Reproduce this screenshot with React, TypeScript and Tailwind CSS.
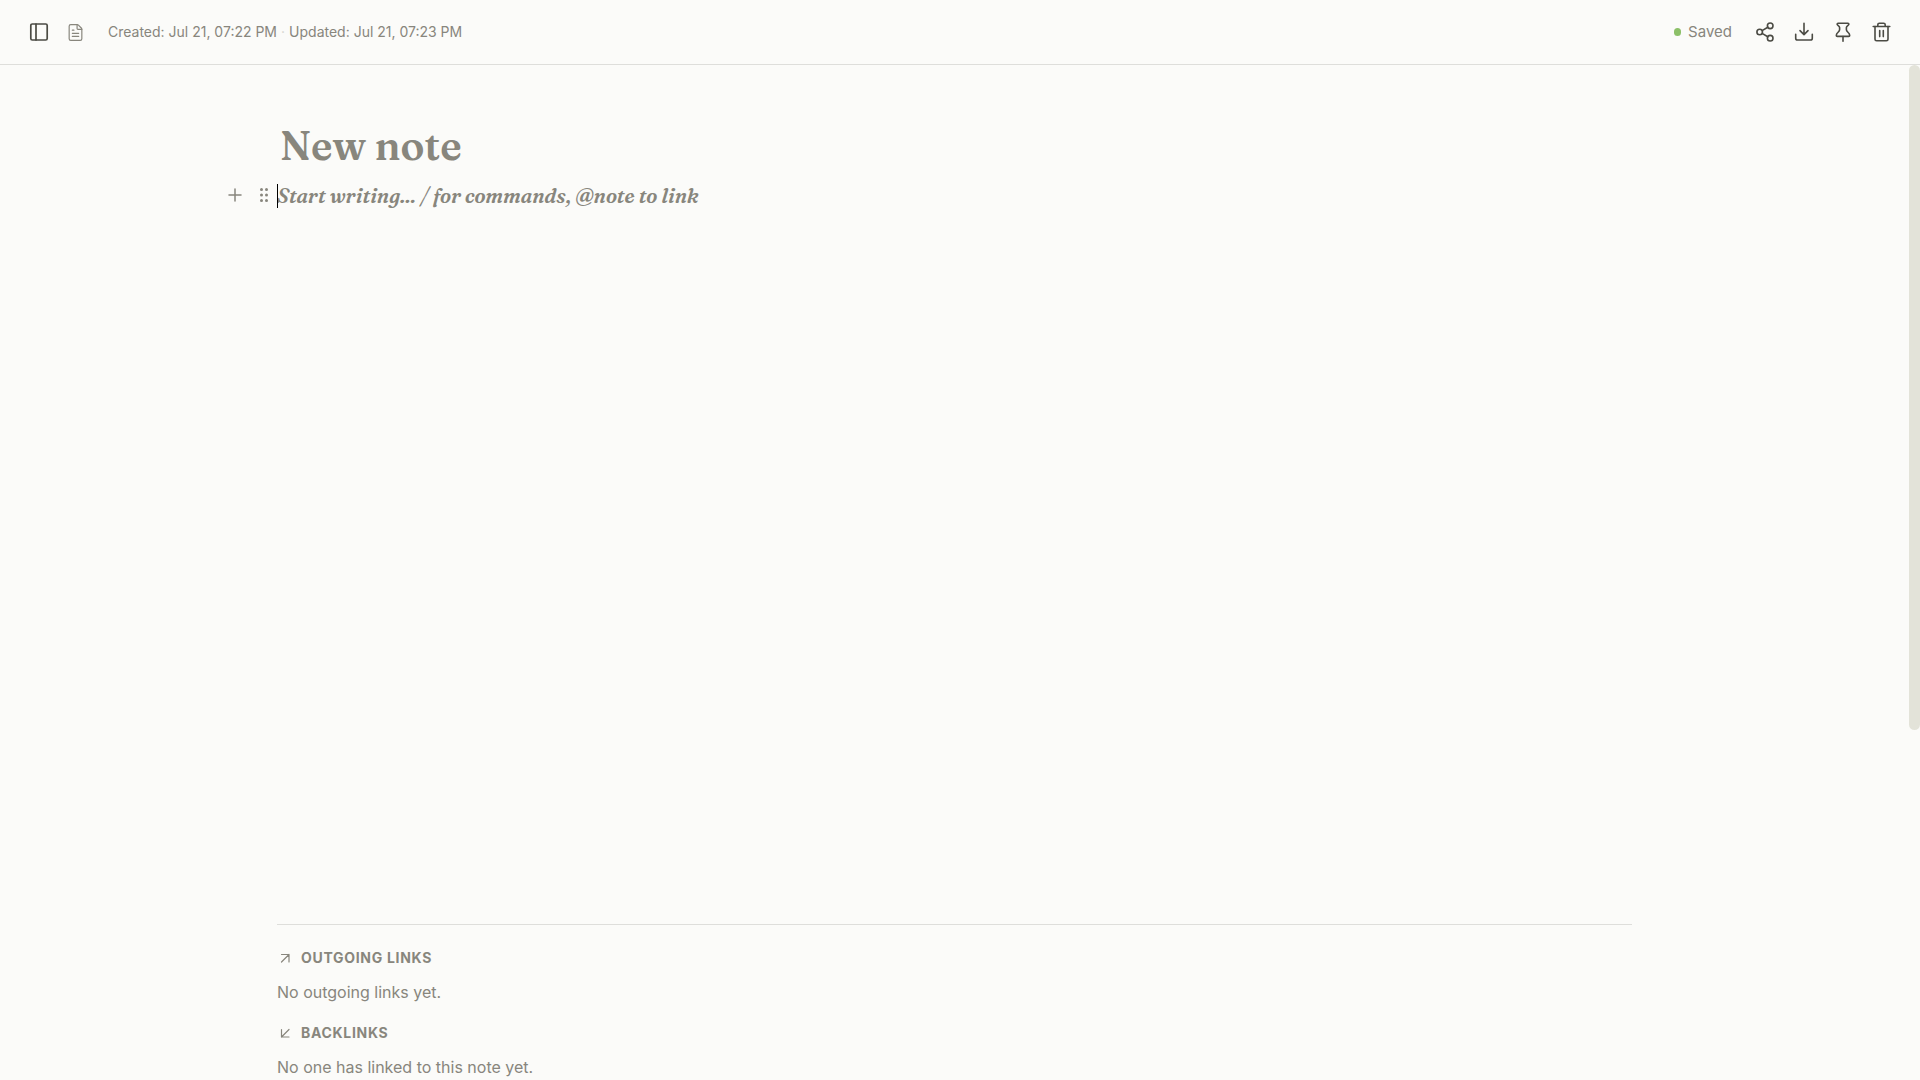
import type { ReactNode } from "react";
import { FileText } from "lucide-react";

/** Toolbar and gutter icons share a 20px grid, section arrows a 16px one. */
function Icon({ children, size = 20, width = 1.5 }: { children: ReactNode; size?: number; width?: number }) {
  return (
    <svg
      width={size}
      height={size}
      viewBox={`0 0 ${size} ${size}`}
      fill="none"
      stroke="currentColor"
      strokeWidth={width}
      strokeLinecap="round"
      strokeLinejoin="round"
      aria-hidden="true"
    >
      {children}
    </svg>
  );
}

const Icons = {
  Sidebar: () => (
    <Icon width={1.7}>
      <rect x="1.8" y="2" width="16.4" height="16" rx="1.5" />
      <path d="M7 2v16" />
    </Icon>
  ),
  Share: () => (
    <Icon width={1.6}>
      <circle cx="4.7" cy="10" r="2.8" />
      <circle cx="15.2" cy="3.8" r="2.8" />
      <circle cx="15.2" cy="16.2" r="2.8" />
      <path d="M7.1 8.6l5.7-3.4M7.1 11.4l5.7 3.4" />
    </Icon>
  ),
  Download: () => (
    <Icon width={1.6}>
      <path d="M10 1.2v11.3M6 8.6l4 4 4-4" />
      <path d="M1.7 12.3v3.9a1.8 1.8 0 0 0 1.8 1.8h13a1.8 1.8 0 0 0 1.8-1.8v-3.9" />
    </Icon>
  ),
  Pin: () => (
    <Icon width={1.6}>
      <path d="M5.2 1.2h9.6a1 1 0 0 1 .9 1.5c-.5.9-2.3 1.4-2.3 2.9v2.2c0 2.4 3.3 2.6 3.3 5.6a1 1 0 0 1-1 1H4.3a1 1 0 0 1-1-1c0-3 3.3-3.2 3.3-5.6V5.6c0-1.5-1.8-2-2.3-2.9a1 1 0 0 1 .9-1.5z" />
      <path d="M10 14.6v4.6" />
    </Icon>
  ),
  Trash: () => (
    <Icon width={1.6}>
      <path d="M1.2 4.5h16.6M5.8 4.3V2.8a1.6 1.6 0 0 1 1.6-1.6h4.2a1.6 1.6 0 0 1 1.6 1.6v1.5" />
      <path d="M3 4.6v12.6a1.6 1.6 0 0 0 1.6 1.6h9.8a1.6 1.6 0 0 0 1.6-1.6V4.6M7.7 8.6v6M11.3 8.6v6" />
    </Icon>
  ),
  Plus: () => (
    <Icon>
      <path d="M4 10h12M10 4v12" />
    </Icon>
  ),
  Grip: () => (
    <Icon width={0}>
      <g fill="currentColor">
        <circle cx="7.5" cy="4.5" r="1.5" />
        <circle cx="12.5" cy="4.5" r="1.5" />
        <circle cx="7.5" cy="10" r="1.5" />
        <circle cx="12.5" cy="10" r="1.5" />
        <circle cx="7.5" cy="15.5" r="1.5" />
        <circle cx="12.5" cy="15.5" r="1.5" />
      </g>
    </Icon>
  ),
  ArrowOut: () => (
    <Icon size={16} width={1.2}>
      <path d="M4.5 12L12 4.5M4.5 4.5H12V12" />
    </Icon>
  ),
  ArrowIn: () => (
    <Icon size={16} width={1.2}>
      <path d="M12 4.5L4.5 12M4.5 4.5V12H12" />
    </Icon>
  ),
};

const actions = [
  { label: "Share", Glyph: Icons.Share },
  { label: "Download", Glyph: Icons.Download },
  { label: "Pin", Glyph: Icons.Pin },
  { label: "Delete", Glyph: Icons.Trash },
];

const linkSections = [
  { title: "Outgoing links", empty: "No outgoing links yet.", Glyph: Icons.ArrowOut },
  { title: "Backlinks", empty: "No one has linked to this note yet.", Glyph: Icons.ArrowIn },
];

function TopBar() {
  return (
    <header className="flex h-[65px] shrink-0 items-center border-b border-[#dededb] px-5">
      <button type="button" aria-label="Toggle sidebar" className="grid h-9 w-[38px] place-items-center text-[#4b4b44]">
        <Icons.Sidebar />
      </button>
      <button type="button" aria-label="Note type" className="grid h-9 w-[34px] place-items-center text-[#88867d]">
        <FileText size={19} strokeWidth={1.5} />
      </button>
      <p className="ml-4 flex gap-1 text-sm text-[#88867d]">
        <span>Created: Jul 21, 07:22 PM</span>
        <span className="text-[#d5d5cf]">·</span>
        <span>Updated: Jul 21, 07:23 PM</span>
      </p>

      <div className="ml-auto flex items-center gap-[3px] text-[#4b4b44]">
        <span className="mr-3 flex items-center gap-[7px] text-[15px] text-[#88867d]">
          <span className="h-2 w-[7px] rounded-full bg-[#8cc068]" />
          Saved
        </span>
        {actions.map(({ label, Glyph }) => (
          <button key={label} type="button" aria-label={label} className="grid size-9 place-items-center">
            <Glyph />
          </button>
        ))}
      </div>
    </header>
  );
}

function Editor() {
  return (
    <div className="flex flex-1 flex-col pt-14">
      <input
        type="text"
        aria-label="Note title"
        placeholder="New note"
        className="h-[50px] w-full bg-transparent px-[3px] font-['Fraunces','Liberation_Serif',serif] text-[40px] leading-[50px] font-semibold outline-none placeholder:text-[#88867d]"
      />
      <div className="relative mt-[10px] flex flex-1">
        {/* Block controls hang in the left gutter */}
        <div className="absolute top-1 right-full flex gap-[9px] text-[#88867d]">
          <button type="button" aria-label="Add block">
            <Icons.Plus />
          </button>
          <button type="button" aria-label="Drag block" className="mr-[3px]">
            <Icons.Grip />
          </button>
        </div>
        <span className="absolute top-[3px] left-0 h-6 w-px bg-black" />
        <textarea
          aria-label="Note body"
          placeholder="Start writing... / for commands, @note to link"
          className="w-full resize-none bg-transparent font-['Fraunces','Liberation_Serif',serif] text-xl leading-[30px] font-semibold italic outline-none placeholder:text-[#88867d]"
        />
      </div>
    </div>
  );
}

function Links() {
  return (
    <footer className="flex flex-col gap-[19px] border-t border-[#dededb] pt-[23px] pb-px">
      {linkSections.map(({ title, empty, Glyph }) => (
        <section key={title} className="text-[#88867d]">
          <h2 className="flex items-center gap-2 text-sm font-bold tracking-wider uppercase">
            <Glyph />
            {title}
          </h2>
          <p className="mt-3 text-base">{empty}</p>
        </section>
      ))}
    </footer>
  );
}

export default function App() {
  return (
    <div className="flex h-screen flex-col overflow-hidden bg-[#fbfbf9] font-['Inter',sans-serif]">
      <TopBar />
      <div className="flex min-h-0 flex-1">
        <main className="min-w-0 flex-1 px-16">
          <div className="mx-auto flex h-full max-w-[1355px] flex-col">
            <Editor />
            <Links />
          </div>
        </main>
        {/* Scroll track */}
        <div className="w-[11px] shrink-0">
          <div className="h-[65.5%] rounded-full bg-[#e3e3d9]" />
        </div>
      </div>
    </div>
  );
}
